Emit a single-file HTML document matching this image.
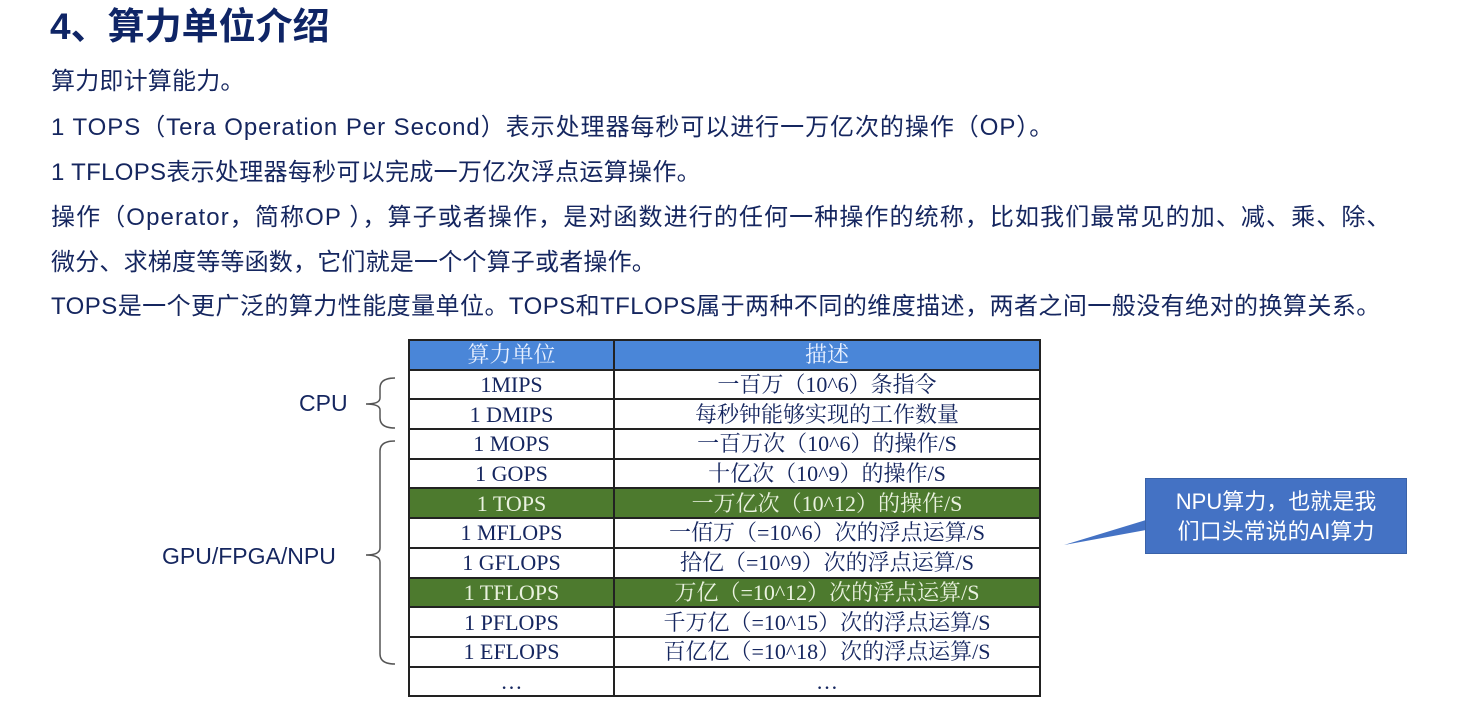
<!DOCTYPE html>
<html><head><meta charset="utf-8"><style>
body{margin:0;width:1461px;height:707px;background:#fff;position:relative;overflow:hidden;font-family:"Liberation Sans","Noto Sans CJK SC",sans-serif;color:#15265f}
.t{position:absolute;left:51px;font-size:24px;white-space:nowrap;line-height:30px;letter-spacing:0.2px}
h1{position:absolute;left:50px;top:3px;margin:0;font-size:37px;font-weight:bold;color:#0f2566;line-height:48px}
table{position:absolute;left:408px;top:339px;border-collapse:collapse;font-family:"Liberation Serif","Noto Serif CJK SC",serif;font-size:22px;color:#15265f}
td{border:2px solid #222;height:27.7px;padding:0;text-align:center;line-height:27px}
tr.h td{background:#4a86d8;color:#e8f0ff}
tr.g td{background:#4d7a2e;color:#eaf2e0}
.lab{position:absolute;font-size:23px;color:#15265f}
.call{position:absolute;left:1145px;top:478px;width:262px;height:76px;background:#4472c4;border:1px solid #3a62a8;color:#fff;font-size:22px;line-height:30px;text-align:center;padding-top:8px;box-sizing:border-box}
</style></head><body>
<h1>4、算力单位介绍</h1>
<div class="t" style="top:67px">算力即计算能力。</div>
<div class="t" style="top:113px;letter-spacing:0.95px">1 TOPS（Tera Operation Per Second）表示处理器每秒可以进行一万亿次的操作（OP）。</div>
<div class="t" style="top:158px;letter-spacing:0.3px">1 TFLOPS表示处理器每秒可以完成一万亿次浮点运算操作。</div>
<div class="t" style="top:203px;letter-spacing:1.1px">操作（Operator，简称OP ），算子或者操作，是对函数进行的任何一种操作的统称，比如我们最常见的加、减、乘、除、</div>
<div class="t" style="top:248px">微分、求梯度等等函数，它们就是一个个算子或者操作。</div>
<div class="t" style="top:292px;letter-spacing:0.45px">TOPS是一个更广泛的算力性能度量单位。TOPS和TFLOPS属于两种不同的维度描述，两者之间一般没有绝对的换算关系。</div>
<table>
<tr class="h"><td style="width:203px">算力单位</td><td style="width:424px">描述</td></tr>
<tr><td>1MIPS</td><td>一百万（10^6）条指令</td></tr>
<tr><td>1 DMIPS</td><td>每秒钟能够实现的工作数量</td></tr>
<tr><td>1 MOPS</td><td>一百万次（10^6）的操作/S</td></tr>
<tr><td>1 GOPS</td><td>十亿次（10^9）的操作/S</td></tr>
<tr class="g"><td>1 TOPS</td><td>一万亿次（10^12）的操作/S</td></tr>
<tr><td>1 MFLOPS</td><td>一佰万（=10^6）次的浮点运算/S</td></tr>
<tr><td>1 GFLOPS</td><td>拾亿（=10^9）次的浮点运算/S</td></tr>
<tr class="g"><td>1 TFLOPS</td><td>万亿（=10^12）次的浮点运算/S</td></tr>
<tr><td>1 PFLOPS</td><td>千万亿（=10^15）次的浮点运算/S</td></tr>
<tr><td>1 EFLOPS</td><td>百亿亿（=10^18）次的浮点运算/S</td></tr>
<tr><td>…</td><td>…</td></tr>
</table>
<div class="lab" style="left:299px;top:390px">CPU</div>
<div class="lab" style="left:162px;top:543px">GPU/FPGA/NPU</div>
<svg style="position:absolute;left:0;top:0" width="1461" height="707">
<path d="M395 378 Q380 378 380 388 L380 398 Q380 404 366 404 Q380 404 380 410 L380 418 Q380 428 395 428" fill="none" stroke="#555" stroke-width="1.5"/>
<path d="M395 441 Q380 441 380 451 L380 548 Q380 555 366 555 Q380 555 380 562 L380 654 Q380 664 395 664" fill="none" stroke="#555" stroke-width="1.5"/>
<polygon points="1146,520 1064,545 1146,530" fill="#4472c4"/>
</svg>
<div class="call">NPU算力，也就是我<br>们口头常说的AI算力</div>
</body></html>
